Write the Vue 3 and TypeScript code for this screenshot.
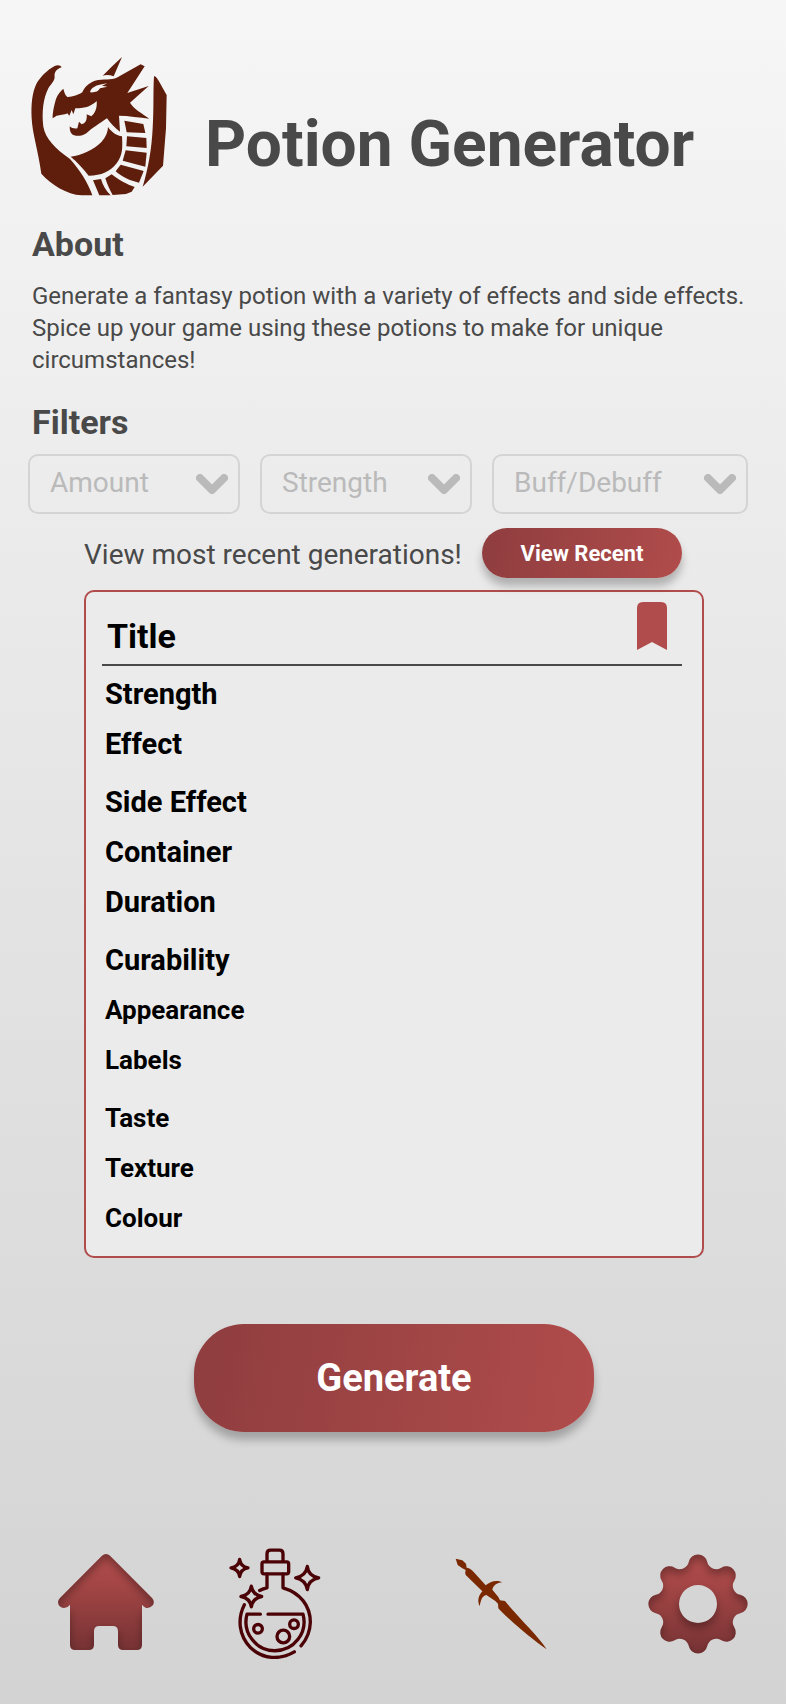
<script setup lang="ts">
import { reactive } from 'vue'

interface Filter {
  id: string
  label: string
  options: string[]
}

const filters: Filter[] = [
  { id: 'amount', label: 'Amount', options: ['1', '2', '3'] },
  { id: 'strength', label: 'Strength', options: ['Weak', 'Strong'] },
  { id: 'kind', label: 'Buff/Debuff', options: ['Buff', 'Debuff'] },
]

const selected = reactive<Record<string, string>>({ amount: '', strength: '', kind: '' })

const propertyGroups: string[][] = [
  ['Strength', 'Effect'],
  ['Side Effect', 'Container', 'Duration'],
  ['Curability', 'Appearance', 'Labels'],
  ['Taste', 'Texture', 'Colour'],
]

/** Outline of an eight-lobed cog centred on 150,150 with a round hole. */
function cogPath(): string {
  const at = (radius: number, degrees: number): [number, number] => {
    const t = (degrees * Math.PI) / 180
    return [150 + radius * Math.cos(t), 150 + radius * Math.sin(t)]
  }
  const join = (lobe: number, valley: number): string => {
    const [x1, y1] = at(121, lobe)
    const [x2, y2] = at(143, valley)
    return `${((x1 + x2) / 2).toFixed(1)} ${((y1 + y2) / 2).toFixed(1)}`
  }
  let d = `M${join(-90, -112.5)}`
  for (let k = 0; k < 8; k++) {
    const a = -90 + k * 45
    d += `A28 28 0 0 1 ${join(a, a + 22.5)}A28 28 0 0 0 ${join(a + 45, a + 22.5)}`
  }
  return `${d}ZM93 150a57 57 0 1 0 114 0a57 57 0 1 0 -114 0Z`
}

const cog = cogPath()
</script>

<template>
  <div class="page">
    <header class="header">
      <svg class="logo" viewBox="33 36 408 417" aria-hidden="true">
        <path d="M125 67C122 60 112 59 104 63C80 76 62 95 50 115C36 143 33 180 35 220C37 265 55 320 64 386C95 420 140 448 185 451H217C205 415 180 375 150 342C105 310 76 280 70 245C65 200 70 160 85 130C92 118 103 110 104 97C102 84 108 72 125 67Z" />
        <path d="M403 94C410 95 415 105 440 150L438 250L429 362L368 425C385 370 395 310 398 250C402 190 399 140 402 94Z" />
        <path d="M306 36L281 94C270 90 258 89 248 92L275 65Z" />
        <path fill-rule="evenodd" d="M98 220C97 205 103 178 108 162C112 150 122 138 130 131C133 140 134 150 142 156C155 157 175 150 187 142C192 128 205 114 225 107C250 100 275 106 290 98L362 58L374 64L322 144L386 123L330 173C340 190 365 205 388 221C360 218 325 212 297 212L300 260C285 250 272 235 261 220C240 235 215 250 200 264C185 275 163 275 155 266C148 258 150 250 149 244C155 250 165 252 172 250L177 230L185 238C196 236 202 225 200 208L214 214C225 205 232 190 230 168C215 182 200 190 166 190L160 208L155 195L148 212L142 205L138 207L110 212ZM210 142C214 128 225 120 262 115L246 122L262 125L240 130C236 140 224 143 210 142Z" />
        <path d="M264 246C275 262 290 272 306 274C308 310 308 330 290 355C270 380 245 392 206 392C190 370 170 350 152 335C185 330 220 315 245 290C258 275 264 260 264 246Z" />
        <path d="M313 227L370 237L376 264L320 262Z" />
        <path d="M321 274L379 279L380 309L319 304Z" />
        <path d="M317 316L380 323L376 365L308 347Z" />
        <path d="M302 359L371 378L357 413C330 408 305 395 287 379Z" />
        <path d="M275 388C295 405 325 420 344 426L335 440L318 447L278 450C270 435 262 420 256 400Z" />
        <path d="M219 406L243 402C248 420 258 438 272 451H238Z" />
      </svg>
      <h1>Potion Generator</h1>
    </header>

    <section class="about">
      <h2>About</h2>
      <p>
        Generate a fantasy potion with a variety of effects and side effects. Spice up your game
        using these potions to make for unique circumstances!
      </p>
    </section>

    <section class="filters">
      <h2>Filters</h2>
      <div class="filter-row">
        <div v-for="filter in filters" :key="filter.id" class="filter">
          <select :id="filter.id" v-model="selected[filter.id]" :aria-label="filter.label">
            <option value="">{{ filter.label }}</option>
            <option v-for="option in filter.options" :key="option">{{ option }}</option>
          </select>
          <svg class="chevron" viewBox="0 0 32 20" aria-hidden="true">
            <path d="M4 4L16 16L28 4" />
          </svg>
        </div>
      </div>
    </section>

    <main class="result">
      <div class="recent">
        <p>View most recent generations!</p>
        <button type="button" class="view-recent">View Recent</button>
      </div>

      <article class="card">
        <div class="card-head">
          <h2>Title</h2>
          <button type="button" class="bookmark" aria-label="Bookmark">
            <svg viewBox="0 0 30 48"><path d="M0 6Q0 0 6 0H24Q30 0 30 6V48L15 40L0 48Z" /></svg>
          </button>
        </div>
        <ul v-for="(group, index) in propertyGroups" :key="index" class="group">
          <li v-for="name in group" :key="name" :class="{ small: index > 1 && name !== 'Curability' }">
            {{ name }}
          </li>
        </ul>
      </article>

      <button type="button" class="generate">Generate</button>
    </main>

    <nav class="nav">
      <a href="#home" aria-label="Home">
        <svg class="home" viewBox="24 42 288 300">
          <defs>
            <linearGradient id="redFade" x1="0" y1="0" x2="0" y2="1">
              <stop offset="0" stop-color="#b04c4b" />
              <stop offset="0.3" stop-color="#a54646" />
              <stop offset="1" stop-color="#763233" />
            </linearGradient>
            <filter id="innerShade" x="-25%" y="-25%" width="150%" height="150%" color-interpolation-filters="sRGB">
              <feComponentTransfer in="SourceAlpha" result="outside">
                <feFuncA type="linear" slope="-1" intercept="1" />
              </feComponentTransfer>
              <feGaussianBlur in="outside" stdDeviation="12" />
              <feOffset dy="16" />
              <feComposite in2="SourceAlpha" operator="in" />
              <feComponentTransfer result="shade">
                <feFuncA type="linear" slope="0.32" />
              </feComponentTransfer>
              <feMerge>
                <feMergeNode in="SourceGraphic" />
                <feMergeNode in="shade" />
              </feMerge>
            </filter>
          </defs>
          <path filter="url(#innerShade)" fill="url(#redFade)" d="M156 47Q168 37 180 47L306 174Q315 184 309 195Q300 206 287 203Q281 200 276 194V314Q276 330 260 330H220Q204 330 204 314V274Q204 258 188 258H148Q132 258 132 274V314Q132 330 116 330H76Q60 330 60 314V194Q54 203 42 204Q26 203 24 187Q24 180 30 174Z" />
        </svg>
      </a>
      <a href="#potions" aria-label="Potions">
        <svg class="potion" viewBox="27 28 276 332">
          <path d="M141 66V45Q141 34 152 34H178Q189 34 189 45V66" />
          <rect x="126" y="69" width="80" height="36" rx="6" />
          <path d="M141 106V147Q130 149 119 155M189 106V147C240 162 271 200 271 250Q270 290 243 321M73 198C52 240 56 290 92 327C130 362 180 364 223 339" />
          <path d="M121 226H81A87 87 0 1 0 249 226H144" />
          <circle cx="114" cy="270" r="13" />
          <circle cx="222" cy="256" r="13" />
          <circle cx="190" cy="293" r="19" />
          <path d="M59 62Q62 84 84 87Q62 91 59 113Q56 91 33 87Q56 84 59 62Z" />
          <path d="M262 83Q265 112 296 117Q265 123 262 152Q257 123 227 117Q257 112 262 83Z" />
          <path d="M94 142Q98 168 125 173Q98 178 94 204Q90 178 63 173Q90 168 94 142Z" />
        </svg>
      </a>
      <a href="#weapons" aria-label="Weapons">
        <svg class="dagger" viewBox="30 26 276 276">
          <path d="M32 28L52 33L63 43L65 55C75 57 80 60 86 68L122 108C135 96 155 90 172 99C155 101 145 108 142 121L160 143L165 153L180 155L188 165C230 215 280 260 305 300C260 268 215 232 164 181L160 177L159 163L151 155L124 137C110 140 107 155 104 171C96 155 100 140 112 126L66 81C60 76 60 70 62 62L52 57L38 47Z" />
        </svg>
      </a>
      <a href="#settings" aria-label="Settings">
        <svg class="cog" viewBox="0 0 300 300">
          <path filter="url(#innerShade)" fill="url(#redFade)" fill-rule="evenodd" :d="cog" />
        </svg>
      </a>
    </nav>
  </div>
</template>

<style>
body {
  margin: 0;
}
</style>

<style scoped>
.page {
  box-sizing: border-box;
  min-height: 100vh;
  padding: 57px 38px 40px 28px;
  background: linear-gradient(#f6f6f6, #d3d3d3);
  color: #494949;
  font-family: Roboto, "Liberation Sans", sans-serif;
}

h1,
h2,
p,
ul {
  margin: 0;
  padding: 0;
}

svg {
  display: block;
}

button {
  border: 0;
  font-family: inherit;
  font-weight: 700;
  cursor: pointer;
}

.header {
  display: flex;
  align-items: flex-start;
  gap: 38px;
  padding-left: 3px;
}

.logo {
  width: 136px;
  height: 139px;
  fill: #5f1d0b;
}

h1 {
  padding-top: 48px;
  font-size: 64px;
  line-height: 80px;
}

h2 {
  font-size: 34px;
  line-height: 40px;
}

.about {
  padding: 28px 0 0 4px;
}

.about p {
  margin-top: 16px;
  font-size: 24px;
  line-height: 32px;
}

.filters {
  margin-top: 26px;
}

.filters h2 {
  padding-left: 4px;
}

.filter-row {
  display: grid;
  grid-template-columns: 212fr 212fr 256fr;
  gap: 20px;
  margin-top: 12px;
}

.filter {
  display: grid;
  align-items: center;
}

.filter select,
.chevron {
  grid-area: 1 / 1;
}

.filter select {
  width: 100%;
  height: 60px;
  padding: 0 44px 4px 20px;
  border: 2px solid #d4d4d4;
  border-radius: 10px;
  appearance: none;
  background: transparent;
  color: #bababa;
  font-family: inherit;
  font-size: 28px;
}

.chevron {
  justify-self: end;
  width: 32px;
  height: 20px;
  margin-right: 12px;
  fill: none;
  stroke: #bababa;
  stroke-width: 8;
  stroke-linecap: round;
  stroke-linejoin: round;
  pointer-events: none;
}

.result {
  margin: 14px 44px 0 56px;
}

.recent {
  display: flex;
  justify-content: space-between;
  align-items: center;
  padding-right: 22px;
}

.recent p {
  font-size: 28px;
  line-height: 40px;
  padding-top: 4px;
}

.view-recent,
.generate {
  background: linear-gradient(100deg, #8f3d3f, #b04c4b);
  box-shadow: 0 8px 8px rgba(0, 0, 0, 0.25);
  color: #fff;
}

.view-recent {
  width: 200px;
  height: 50px;
  border-radius: 25px;
  font-size: 22px;
}

.card {
  box-sizing: border-box;
  margin-top: 12px;
  padding: 10px 20px 8px 16px;
  border: 2px solid #b04c4b;
  border-radius: 10px;
  background: #ebebeb;
  color: #000;
}

.card-head {
  display: flex;
  justify-content: space-between;
  align-items: flex-start;
  height: 62px;
  padding: 0 15px 0 5px;
  border-bottom: 2px solid #494949;
}

.card-head h2 {
  padding-top: 14px;
}

.bookmark {
  padding: 0;
  background: none;
}

.bookmark svg {
  width: 30px;
  height: 48px;
  fill: #b04c4b;
}

.group {
  padding: 3px 0 5px 3px;
  list-style: none;
}

.group li {
  font-size: 29px;
  font-weight: 700;
  line-height: 50px;
}

.group .small {
  font-size: 26px;
}

.generate {
  display: block;
  width: 400px;
  height: 108px;
  margin: 66px auto 0;
  border-radius: 50px;
  font-size: 38px;
}

.nav {
  display: grid;
  grid-template-columns: 171fr 226fr 193fr 100px;
  align-items: center;
  margin-top: 116px;
  padding-left: 30px;
}

.home {
  width: 96px;
  height: 100px;
}

.potion {
  width: 92px;
  height: 111px;
  fill: none;
  stroke: #4b0206;
  stroke-width: 10;
  stroke-linecap: round;
  stroke-linejoin: round;
}

.dagger {
  width: 92px;
  height: 92px;
  fill: #7a2800;
}

.cog {
  width: 100px;
  height: 100px;
}
</style>
